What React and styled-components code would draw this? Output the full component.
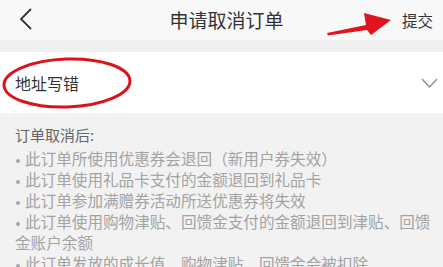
import React from 'react';
import styled, { createGlobalStyle } from 'styled-components';

const notes = [
  '此订单所使用优惠券会退回（新用户券失效）',
  '此订单使用礼品卡支付的金额退回到礼品卡',
  '此订单参加满赠券活动所送优惠券将失效',
  '此订单使用购物津贴、回馈金支付的金额退回到津贴、回馈金账户余额',
  '此订单发放的成长值、购物津贴、回馈金会被扣除',
];

function App() {
  return (
    <Page>
      <GlobalStyle />
      <Header>
        <BackButton>
          <svg width="14" height="22" viewBox="0 0 14 22">
            <polyline points="12,1 2,11 12,21" fill="none" stroke="#333" strokeWidth="1.8" />
          </svg>
        </BackButton>
        <Title>申请取消订单</Title>
        <Submit>提交</Submit>
      </Header>
      <Band />
      <ReasonRow>
        <ReasonText>地址写错</ReasonText>
        <svg width="17" height="10" viewBox="0 0 17 10">
          <polyline points="1,1 8.5,9 16,1" fill="none" stroke="#8c8c8c" strokeWidth="1.3" />
        </svg>
      </ReasonRow>
      <Notes>
        <NotesTitle>订单取消后:</NotesTitle>
        <NoteList>
          {notes.map((n) => (
            <NoteItem key={n}>
              <Dot />
              {n}
            </NoteItem>
          ))}
        </NoteList>
      </Notes>
      <Marks width="443" height="267" viewBox="0 0 443 267">
        <ellipse cx="67" cy="83" rx="63" ry="24" fill="none" stroke="#dc121b" strokeWidth="3" transform="rotate(-2 67 83)" />
        <polygon points="327,33 366,25 364,13 391,20 371,35 367,30 328,35.5" fill="#e0141c" />
      </Marks>
    </Page>
  );
}

const GlobalStyle = createGlobalStyle`
  body {
    margin: 0;
    background: #f2f2f2;
    font-family: "Noto Sans CJK SC", "Noto Sans", sans-serif;
  }
`;

const Page = styled.div`
  position: relative;
  width: 443px;
  height: 267px;
  overflow: hidden;
  background: #f2f2f2;
`;

const Header = styled.header`
  display: grid;
  grid-template-columns: 70px 1fr 60px;
  align-items: center;
  height: 40px;
  background: #f8f8f8;
`;

const BackButton = styled.div`
  display: flex;
  align-items: center;
  padding-left: 19px;
  padding-bottom: 2px;
`;

const Title = styled.h1`
  margin: 0;
  text-align: center;
  font-size: 19px;
  font-weight: 400;
  color: #333;
  line-height: 40px;
`;

const Submit = styled.div`
  text-align: right;
  padding-right: 10px;
  font-size: 15.5px;
  color: #333;
`;

const Band = styled.div`
  height: 12px;
  background: #f0f0f0;
`;

const ReasonRow = styled.div`
  display: flex;
  align-items: center;
  justify-content: space-between;
  height: 61px;
  padding: 0 5px 0 15px;
  background: #fff;
`;

const ReasonText = styled.span`
  font-size: 16px;
  color: #333;
`;

const Notes = styled.section`
  padding: 11px 8px 0 15px;
`;

const NotesTitle = styled.div`
  font-size: 15px;
  line-height: 22px;
  color: #666;
  margin-bottom: 2px;
`;

const NoteList = styled.ul`
  margin: 0;
  padding: 0;
  list-style: none;
`;

const NoteItem = styled.li`
  font-size: 15.6px;
  line-height: 21px;
  color: #a3a3a3;
`;

const Dot = styled.span`
  display: inline-block;
  width: 4px;
  height: 4px;
  margin: 0 5px 0 1px;
  border-radius: 50%;
  background: #a8a8a8;
  vertical-align: middle;
`;

const Marks = styled.svg`
  position: absolute;
  top: 0;
  left: 0;
  pointer-events: none;
`;

export default App;
